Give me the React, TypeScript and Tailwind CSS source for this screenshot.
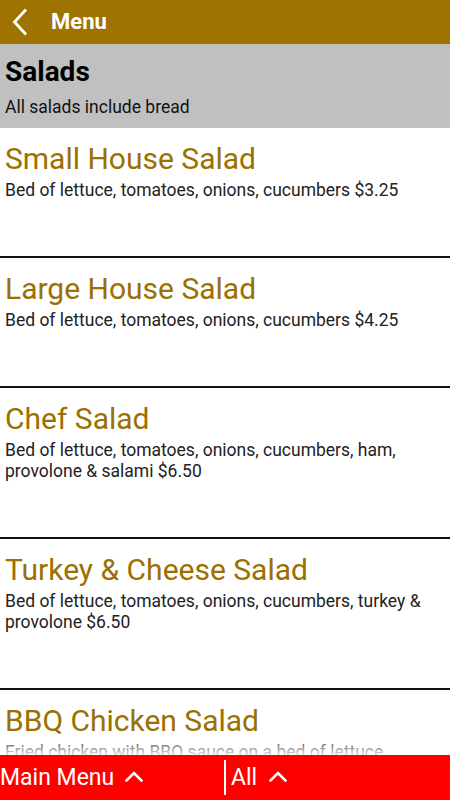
import React from "react";

const items = [
  { title: "Small House Salad", desc: "Bed of lettuce, tomatoes, onions, cucumbers $3.25" },
  { title: "Large House Salad", desc: "Bed of lettuce, tomatoes, onions, cucumbers $4.25" },
  { title: "Chef Salad", desc: "Bed of lettuce, tomatoes, onions, cucumbers, ham, provolone & salami $6.50" },
  { title: "Turkey & Cheese Salad", desc: "Bed of lettuce, tomatoes, onions, cucumbers, turkey & provolone $6.50" },
  { title: "BBQ Chicken Salad", desc: "Fried chicken with BBQ sauce on a bed of lettuce, tomatoes, onions, cucumbers $6.95" },
];

function ChevronUp() {
  return (
    <svg width="18" height="11" viewBox="0 0 18 11" fill="none">
      <polyline points="1.5,9.5 9,2 16.5,9.5" stroke="white" strokeWidth="2.6" strokeLinecap="square" />
    </svg>
  );
}

export default function App() {
  return (
    <div
      className="relative flex h-[800px] w-[450px] flex-col overflow-hidden bg-white"
      style={{ fontFamily: "Roboto, 'Noto Sans', sans-serif" }}
    >
      <header className="flex h-[44px] shrink-0 items-center bg-[#9e7300] pl-[12px]">
        <svg width="16" height="28" viewBox="0 0 16 28" fill="none">
          <polyline points="14,1.5 2.5,14 14,26.5" stroke="white" strokeWidth="2.8" strokeLinecap="butt" />
        </svg>
        <span className="ml-[23px] text-[22px] font-bold leading-[44px] text-white">Menu</span>
      </header>

      <main className="flex-1 overflow-hidden">
        <section className="bg-[#c0c0c0] px-[5px] pt-[12px] pb-[11px]">
          <h1 className="text-[28px] font-bold leading-[32px] text-black">Salads</h1>
          <p className="mt-[9px] text-[17.5px] leading-[20px] text-[#111]">All salads include bread</p>
        </section>
        {items.map((it) => (
          <div key={it.title} className="border-b-2 border-[#111] px-[5px] pt-[13px] pb-[55px]">
            <div className="text-[30px] leading-[36px] text-[#9b7000]">{it.title}</div>
            <div className="mt-[3px] text-[17.5px] leading-[21px] text-[#222]">{it.desc}</div>
          </div>
        ))}
      </main>

      <div className="pointer-events-none absolute bottom-[45px] left-0 h-[20px] w-full bg-linear-to-b from-white/0 to-white/85" />

      <footer className="flex h-[45px] shrink-0 items-center bg-[#ff0000] text-white">
        <div className="flex w-[224px] items-center">
          <span className="text-[23px] leading-[45px]">Main Menu</span>
          <span className="ml-[11px] mb-[3px]"><ChevronUp /></span>
        </div>
        <div className="h-[35px] w-[2px] bg-white" />
        <div className="flex flex-1 items-center pl-[5px]">
          <span className="text-[23px] leading-[45px]">All</span>
          <span className="ml-[12px] mb-[3px]"><ChevronUp /></span>
        </div>
      </footer>
    </div>
  );
}
